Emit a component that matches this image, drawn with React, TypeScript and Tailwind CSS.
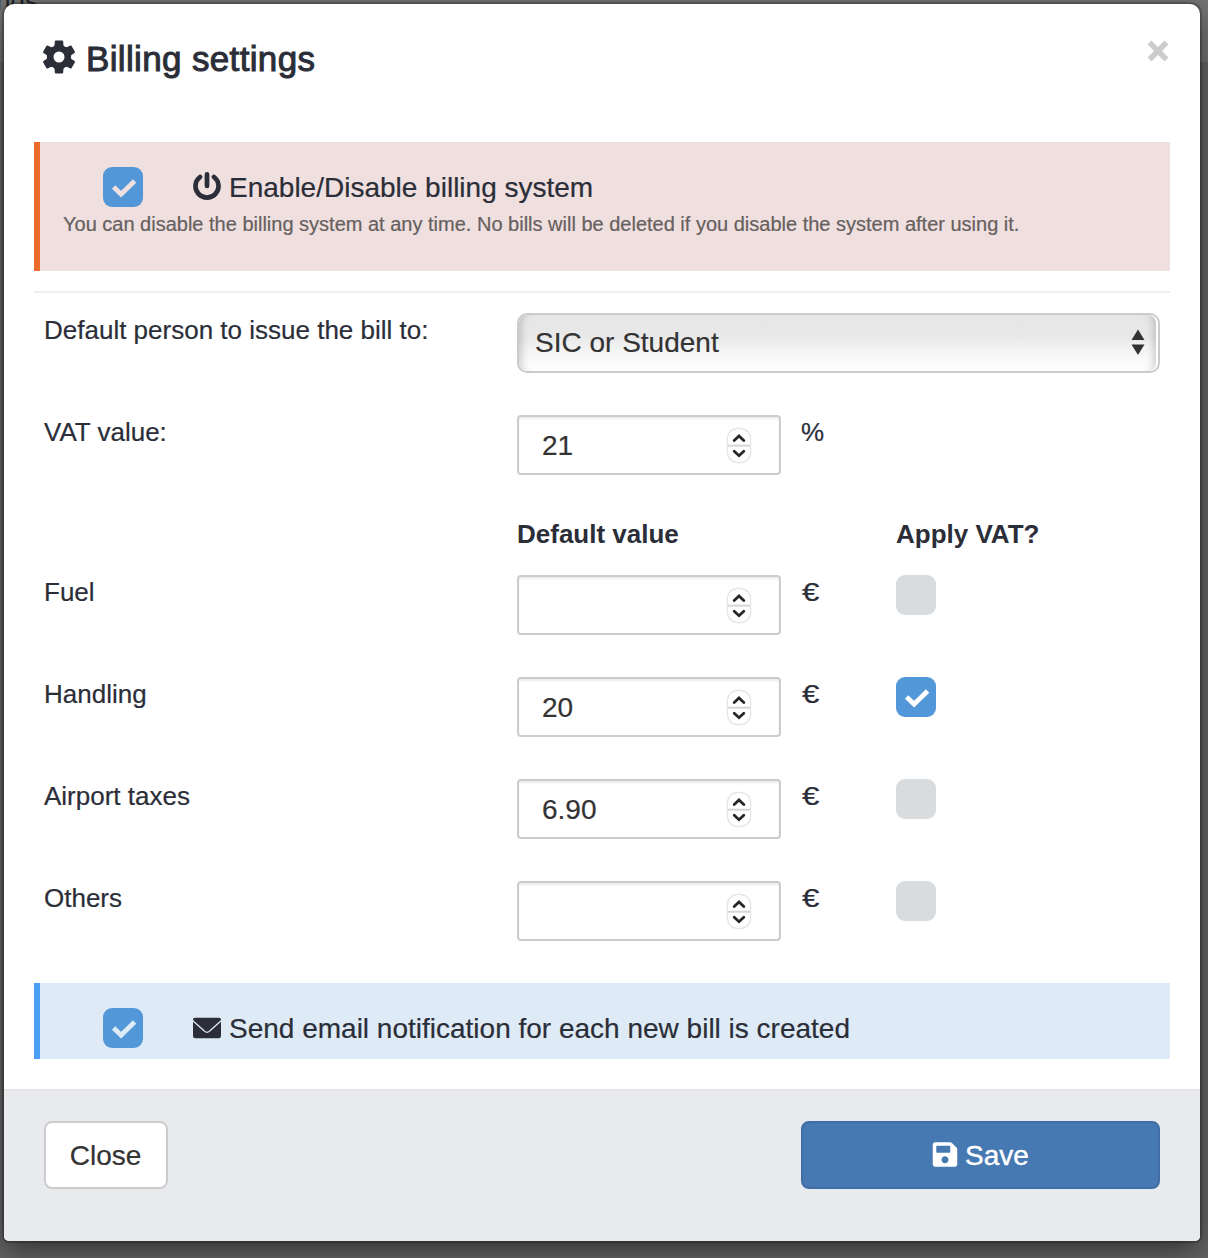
import React from "react";
import { FaSave } from "react-icons/fa";

function GearIcon({ className }: { className?: string }) {
  return (
    <svg viewBox="-17 -17 34 34" className={className} fill="currentColor">
      <circle r="8.8" fill="none" stroke="currentColor" strokeWidth="6.6" />
      {[0, 60, 120, 180, 240, 300].map((angle) => (
        <path
          key={angle}
          transform={`rotate(${angle})`}
          d="M-5.4 -9L-4.4 -12.2L-4.2 -15.5Q-4.1 -16.4 -3.2 -16.4H3.2Q4.1 -16.4 4.2 -15.5L4.4 -12.2L5.4 -9Z"
        />
      ))}
    </svg>
  );
}

function PowerIcon({ className }: { className?: string }) {
  return (
    <svg viewBox="-14 -14 28 28" className={className} fill="none" stroke="currentColor" strokeWidth="4.7" strokeLinecap="round">
      <path d="M-7 -9A11.5 11.5 0 1 0 7 -9M0 -11.6V0" />
    </svg>
  );
}

function MailIcon({ className }: { className?: string }) {
  return (
    <svg viewBox="0 0 28 21" className={className}>
      <rect width="28" height="21" rx="2.4" fill="currentColor" />
      <path d="M-0.5 3L10.2 12.4Q14 17.4 17.8 12.4L28.5 3" fill="none" stroke="#deebf6" strokeWidth="1.3" />
    </svg>
  );
}

function CheckBox({ checked, mark = "text-white" }: { checked: boolean; mark?: string }) {
  return (
    <span
      role="checkbox"
      aria-checked={checked}
      className={`block size-10 shrink-0 rounded-[9px] ${checked ? "bg-[#5297d8]" : "bg-[#d8dcdf]"} ${mark}`}
    >
      {checked && (
        <svg viewBox="0 0 40 40" className="size-10">
          <path d="M10.6 20.1L18.1 27.2L31.6 14" fill="none" stroke="currentColor" strokeWidth="4.8" />
        </svg>
      )}
    </span>
  );
}

function Stepper() {
  return (
    <span className="flex h-[33px] w-[22px] flex-col rounded-[9px] bg-white shadow-[0_0_2px_rgba(0,0,0,0.4)]">
      <svg viewBox="1 0.5 22 33" className="h-[33px] w-[22px]" fill="none">
        <path d="M0 17.2H24" stroke="#d6d6d6" strokeWidth="2" />
        <path d="M7.2 12L12 7.5L16.8 12M7.2 22.7L12 27.2L16.8 22.7" stroke="#262626" strokeWidth="2.8" strokeLinecap="round" />
      </svg>
    </span>
  );
}

function NumberField({ value }: { value: string }) {
  return (
    <div className="flex h-[60px] w-[264px] items-center justify-between rounded-[4px] border-2 border-[#cccccc] bg-white pr-[29px] pl-[23px] text-[28px] text-[#333333] shadow-[inset_0_2px_2px_rgba(0,0,0,0.075)]">
      <span className="pt-[2px] leading-8">{value}</span>
      <Stepper />
    </div>
  );
}

function Row({ label, value, unit, vat }: { label: string; value: string; unit: string; vat?: boolean }) {
  return (
    <div className="mb-[42px] flex h-[60px] items-start pl-[10px]">
      <span className="w-[473px] leading-[34px]">{label}</span>
      <NumberField value={value} />
      <span className="ml-5 w-[95px] leading-[34px]">
        <span className={unit === "€" ? "inline-block origin-left translate-x-px scale-x-[1.2]" : ""}>{unit}</span>
      </span>
      {vat !== undefined && <CheckBox checked={vat} />}
    </div>
  );
}

export default function App() {
  return (
    <div className="relative h-[1258px] w-[1208px] overflow-hidden bg-[#656565] bg-[linear-gradient(#747474_0,#747474_62px,#656565_62px)] font-['Liberation_Sans',Arial,sans-serif]">
      <span className="absolute -top-[13px] -left-[4px] text-[26px] leading-7 text-[#20222a]">ngs</span>
      <main className="relative mx-1 mt-1 flex h-[1237px] w-[1196px] flex-col overflow-hidden rounded-[10px_10px_5px_5px] bg-white text-[26px] text-[#2b2e38] shadow-[0_0_0_2px_rgba(0,0,0,0.22),0_10px_30px_rgba(0,0,0,0.5)] [-webkit-text-stroke-width:0.2px]">
        <header className="flex h-[138px] justify-between pr-[30px] pl-[38px]">
          <h1 className="flex h-9 translate-y-[35px] items-center text-[35px] leading-9 tracking-[0.35px] [-webkit-text-stroke:1px_#2b2e38]">
            <GearIcon className="mr-[10px] size-[34px]" />
            <span className="translate-y-[2px]">Billing settings</span>
          </h1>
          <svg viewBox="0 0 24 24" className="mt-[35px] size-6" aria-label="Close">
            <path d="M3.5 3.5L20.5 20.5M20.5 3.5L3.5 20.5" stroke="#cccccc" strokeWidth="5.6" />
          </svg>
        </header>
        <section className="mx-[30px] flex h-[129px] flex-col border-l-[6px] border-[#ec6a2c] bg-[#efdfdf] pt-[25px]">
          <div className="flex h-10 items-center pl-[63px] text-[28px]">
            <CheckBox checked mark="text-[#efdfdf]" />
            <PowerIcon className="mr-2 ml-[50px] size-7 -translate-y-px" />
            <span className="pt-[2px]">Enable/Disable billing system</span>
          </div>
          <p className="mt-[3px] pl-[23px] text-[20px] leading-7 text-[#66605e]">
            You can disable the billing system at any time. No bills will be deleted if you disable the system after using it.
          </p>
        </section>
        <hr className="mx-[30px] mt-5 mb-5 border-t-2 border-[#eeeeee]" />
        <div className="mx-[30px] flex flex-col">
          <div className="mb-[42px] flex h-[60px] items-start pl-[10px]">
            <span className="w-[473px] leading-[34px]">Default person to issue the bill to:</span>
            <div className="h-[60px] w-[643px] rounded-[10px] border-2 border-[#cbcbcb] bg-white pr-[2px]">
              <div className="flex h-full items-center justify-between rounded-[8px] bg-[linear-gradient(#e6e6e6,#e9e9e9_40%,#f5f5f5_65%,#ffffff)] pr-[11px] pl-4 text-[28px] text-[#333333] shadow-[inset_9px_0_7px_-6px_rgba(0,0,0,0.16),inset_-9px_0_7px_-6px_rgba(0,0,0,0.16)]">
                <span>SIC or Student</span>
                <svg viewBox="0 0 14 26" className="h-[26px] w-[14px] -translate-y-px" fill="#333333">
                  <path d="M7 0.5L13.5 11H0.5ZM7 26L13.5 15.5H0.5Z" />
                </svg>
              </div>
            </div>
          </div>
          <Row label="VAT value:" value="21" unit="%" />
          <div className="flex h-[58px] pl-[483px] font-bold leading-[34px] [-webkit-text-stroke-width:0]">
            <span className="w-[379px]">Default value</span>
            <span>Apply VAT?</span>
          </div>
          <Row label="Fuel" value="" unit="€" vat={false} />
          <Row label="Handling" value="20" unit="€" vat />
          <Row label="Airport taxes" value="6.90" unit="€" vat={false} />
          <Row label="Others" value="" unit="€" vat={false} />
        </div>
        <section className="mx-[30px] flex h-[76px] shrink-0 border-l-[6px] border-[#4a9ff8] bg-[#deebf6] pt-[25px] pl-[63px] text-[28px]">
          <div className="flex h-10 items-center">
            <CheckBox checked mark="text-[#deebf6]" />
            <MailIcon className="mr-2 ml-[50px] h-[21px] w-7 -translate-y-[0.5px]" />
            <span className="pt-[2px]">Send email notification for each new bill is created</span>
          </div>
        </section>
        <footer className="mt-[30px] flex flex-1 items-start justify-between border-t-2 border-[#e5e5e5] bg-[#e9eaed] px-10 pt-[30px] text-[28px]">
          <button className="h-[68px] w-[124px] rounded-[8px] border-2 border-[#cccccc] bg-white pt-[2px] pr-px text-[#333333]">Close</button>
          <button className="flex h-[68px] w-[359px] items-center justify-center rounded-[8px] border-2 border-[#406da5] bg-[#4678b2] pr-px text-white [-webkit-text-stroke:0.4px_white]">
            <FaSave className="mr-[6px] size-7 -translate-y-[0.5px]" />
            <span className="pt-[2px]">Save</span>
          </button>
        </footer>
      </main>
    </div>
  );
}
